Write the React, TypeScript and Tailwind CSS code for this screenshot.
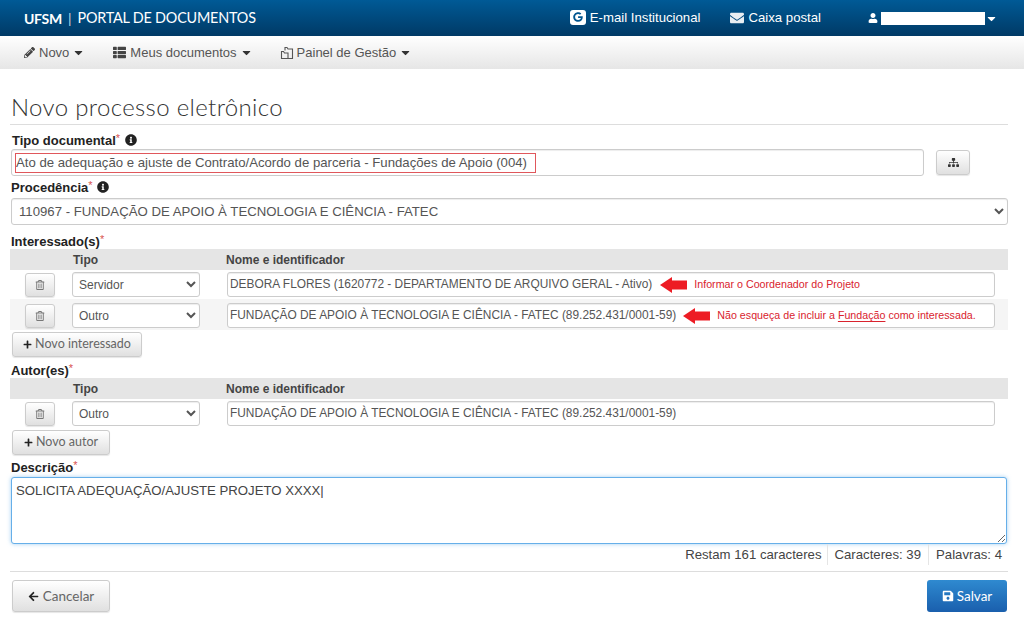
import React from 'react';
import { FaPencilAlt, FaThList, FaCaretDown, FaEnvelope, FaUser, FaSitemap, FaInfoCircle, FaRegTrashAlt, FaPlus, FaArrowLeft, FaSave, FaGoogle } from 'react-icons/fa';

const Req = () => <span className="text-[#d9534f] font-normal text-[11px] leading-none align-[3px]">*</span>;

const Label = ({ children, className = '' }: { children: React.ReactNode; className?: string }) => (
  <div className={`h-[14px] font-bold text-[13px] leading-[14px] text-[#222] ${className}`}>{children}</div>
);

const boxClass = 'bg-white border border-[#ccc] rounded-[3px] shadow-[inset_0_1px_1px_rgba(0,0,0,0.075)]';
const btnClass = 'rounded-[3px] border border-[#ccc] bg-gradient-to-b from-white to-[#e0e0e0] shadow-[0_1px_1px_rgba(0,0,0,0.1)] flex items-center justify-center text-[#666]';

const RedArrow = () => (
  <svg width="27" height="16" viewBox="0 0 27 16" className="shrink-0">
    <path d="M0 8 L12 0 L12 3.5 L27 3.5 L27 12.5 L12 12.5 L12 16 Z" fill="#ed1c24" />
  </svg>
);

// small overlapped-sheets icon used by the "Painel de Gestão" menu
const PanelIcon = () => (
  <svg width="14" height="14" viewBox="0 0 14 14" fill="none" stroke="#555" strokeWidth="1.1" className="mr-[3px]">
    <path d="M5 4.5 V1.5 H7 L8 3 H12.5 V12.5 H7" />
    <path d="M1.5 5.5 H3.5 L4.5 7 H8 V12.5 H1.5 Z" />
  </svg>
);

const Row = ({ tipo, striped, tall, children }: { tipo: string; striped?: boolean; tall?: boolean; children: React.ReactNode }) => (
  <div className={`flex items-end pb-[2px] pl-[15px] pr-[13px] ${tall ? 'h-[31px]' : 'h-[29px]'} ${striped ? 'bg-[#f5f5f5]' : ''}`}>
    <button className={`${btnClass} w-[30px] h-[24px] shrink-0 !text-[#777]`}>
      <FaRegTrashAlt size={10} />
    </button>
    <select defaultValue={tipo} className={`${boxClass} ml-[17px] w-[128px] h-[25px] pl-[2px] text-[12px] text-[#555] shrink-0`}>
      <option>{tipo}</option>
    </select>
    <div className={`${boxClass} ml-[27px] flex-1 h-[25px] flex items-center pl-[2px] text-[11.9px] text-[#555] whitespace-nowrap`}>
      {children}
    </div>
  </div>
);

const TableHead = () => (
  <div className="flex items-center h-[21px] mt-[1px] bg-[#e5e5e5] font-bold text-[12px] text-[#444]">
    <span className="ml-[63px] w-[153px]">Tipo</span>
    <span>Nome e identificador</span>
  </div>
);

export default function App() {
  return (
    <div className="min-h-[633px] bg-white text-[#333] font-['Liberation_Sans',Arial,sans-serif]">
      {/* Top bar */}
      <div className="h-[36px] bg-gradient-to-b from-[#005a96] to-[#003a66] flex items-center text-white pl-[24px]">
        <span className="font-['Lato',sans-serif] font-bold text-[14px] tracking-[-0.3px]">UFSM</span>
        <span className="font-['Lato',sans-serif] text-[14px] mx-[6px] opacity-80">|</span>
        <span className="font-['Lato',sans-serif] text-[14.4px] tracking-[-0.2px]">PORTAL DE DOCUMENTOS</span>
        <span className="ml-[314px] flex items-center text-[13.2px] pb-[1px]">
          <span className="w-[16px] h-[15px] bg-white rounded-[3px] flex items-center justify-center text-[#00558f] mr-[4px]">
            <FaGoogle size={10} />
          </span>
          E-mail Institucional
        </span>
        <span className="ml-[30px] flex items-center text-[13.2px]">
          <FaEnvelope size={14} className="mr-[4px] text-[#e8eef3]" />
          Caixa postal
        </span>
        <FaUser size={10} className="ml-[47px]" />
        <span className="ml-[3px] w-[104px] h-[13px] bg-white" />
        <FaCaretDown size={13} />
      </div>

      {/* Menu */}
      <div className="h-[33px] bg-gradient-to-b from-white to-[#e6e6e6] flex items-center text-[13px] text-[#555] pl-[24px]">
        <span className="flex items-center">
          <FaPencilAlt size={11} className="mr-[4px] text-[#444]" />Novo<FaCaretDown size={13} className="ml-[3px] text-[#333]" />
        </span>
        <span className="flex items-center ml-[28px]">
          <FaThList size={13} className="mr-[4px] text-[#444]" />Meus documentos<FaCaretDown size={13} className="ml-[3px] text-[#333]" />
        </span>
        <span className="flex items-center ml-[27px]">
          <PanelIcon />Painel de Gestão<FaCaretDown size={13} className="ml-[3px] text-[#333]" />
        </span>
      </div>

      {/* Content */}
      <div className="pl-[10px] pr-[16px]">
        <h1 className="mt-[23px] pl-[1px] pb-[3px] border-b border-[#ddd] font-['Lato',sans-serif] font-light text-[24px] leading-[29px] text-[#333] tracking-[0.35px]">
          Novo processo eletrônico
        </h1>

        <Label className="mt-[8px] pl-[2px]">Tipo documental<Req /> <FaInfoCircle size={12} className="inline ml-[1px] align-[-1px]" /></Label>
        <div className="flex items-center mt-[2px]">
          <div className={`${boxClass} ml-[1px] w-[913px] h-[27px] flex items-center pl-[3px]`}>
            <span className="border border-[#e0575c] h-[20px] text-[13.2px] leading-[18px] text-[#555] w-[521px] whitespace-nowrap">
              Ato de adequação e ajuste de Contrato/Acordo de parceria - Fundações de Apoio (004)
            </span>
          </div>
          <button className={`${btnClass} ml-[12px] w-[34px] h-[25px] !text-[#333]`}>
            <FaSitemap size={11} />
          </button>
        </div>

        <Label className="mt-[4px] pl-[1px]">Procedência<Req /> <FaInfoCircle size={12} className="inline ml-[1px] align-[-1px]" /></Label>
        <select defaultValue="f" className={`${boxClass} block mt-[4px] ml-[1px] w-[997px] h-[27px] pl-[3px] text-[13.2px] text-[#555]`}>
          <option value="f">110967 - FUNDAÇÃO DE APOIO À TECNOLOGIA E CIÊNCIA - FATEC</option>
        </select>

        <Label className="mt-[9px] pl-[1px]">Interessado(s)<Req /></Label>
        <TableHead />
        <Row tipo="Servidor">
          DEBORA FLORES (1620772 - DEPARTAMENTO DE ARQUIVO GERAL - Ativo)
          <span className="ml-[8px]"><RedArrow /></span>
          <span className="ml-[7px] text-[10.7px] text-[#d9232e]">Informar o Coordenador do Projeto</span>
        </Row>
        <Row tipo="Outro" striped tall>
          FUNDAÇÃO DE APOIO À TECNOLOGIA E CIÊNCIA - FATEC (89.252.431/0001-59)
          <span className="ml-[7px]"><RedArrow /></span>
          <span className="ml-[7px] text-[10.7px] text-[#d9232e]">
            Não esqueça de incluir a <span className="underline underline-offset-2">Fundação</span> como interessada.
          </span>
        </Row>
        <button className={`${btnClass} ml-[2px] mt-[2px] w-[130px] h-[25px] text-[12.5px] font-['Lato',sans-serif]`}>
          <FaPlus size={9} className="mr-[3px] text-[#222]" />Novo interessado
        </button>

        <Label className="mt-[6px] pl-[1px]">Autor(es)<Req /></Label>
        <TableHead />
        <Row tipo="Outro">FUNDAÇÃO DE APOIO À TECNOLOGIA E CIÊNCIA - FATEC (89.252.431/0001-59)</Row>
        <button className={`${btnClass} ml-[2px] mt-[2px] w-[98px] h-[25px] text-[12.5px] font-['Lato',sans-serif]`}>
          <FaPlus size={9} className="mr-[3px] text-[#222]" />Novo autor
        </button>

        <Label className="mt-[5px] pl-[1px]">Descrição<Req /></Label>
        <textarea
          readOnly
          value="SOLICITA ADEQUAÇÃO/AJUSTE PROJETO XXXX|"
          className="block mt-[3px] ml-[1px] w-[996px] h-[67px] px-[4px] py-[4px] bg-white border border-[#66afe9] rounded-[3px] shadow-[0_0_4px_rgba(102,175,233,0.6)] text-[13.2px] leading-[18px] text-[#444] outline-none"
        />
        <div className="flex justify-end pr-[6px] h-[21px] text-[13.2px] text-[#444]">
          <span className="flex items-center pr-[5px] border-r border-[#e5e5e5]">Restam 161 caracteres</span>
          <span className="flex items-center px-[7px] border-r border-[#e5e5e5]">Caracteres: 39</span>
          <span className="flex items-center pl-[7px]">Palavras: 4</span>
        </div>

        <div className="mt-[6px] pt-[8px] border-t border-[#ddd] flex justify-between pl-[2px] pr-[1px]">
          <button className={`${btnClass} w-[98px] h-[32px] text-[13.5px] font-['Lato',sans-serif]`}>
            <FaArrowLeft size={11} className="mr-[4px] text-[#222]" />Cancelar
          </button>
          <button className="w-[80px] h-[32px] rounded-[3px] bg-gradient-to-b from-[#2f8ad0] to-[#1a5fad] text-white text-[13.5px] font-['Lato',sans-serif] flex items-center justify-center">
            <FaSave size={12} className="mr-[3px]" />Salvar
          </button>
        </div>
      </div>
    </div>
  );
}
